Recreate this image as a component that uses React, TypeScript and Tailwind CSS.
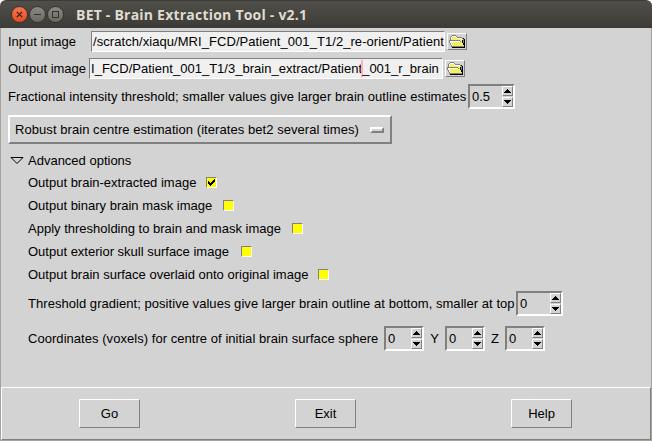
import React from "react";

function Label({ w, className = "", children }: { w: number; className?: string; children: React.ReactNode }) {
  return (
    <span className={`block shrink-0 whitespace-pre ${className}`} style={{ width: w }}>
      {children}
    </span>
  );
}

function Spin({ value, className }: { value: string; className: string }) {
  return (
    <div
      className={`flex h-[25px] shrink-0 items-center justify-between border-2 border-t-[#808080] border-l-[#808080] border-r-white border-b-white pl-[2px] ${className}`}
    >
      <span>{value}</span>
      <div className="flex h-[21px] w-[11px] flex-col justify-between">
        <ArrowButton d="M4 2H5V3H6V4H7V5H8V6H1V5H2V4H3V3H4Z" />
        <ArrowButton d="M1 2H8V3H7V4H6V5H5V6H4V5H3V4H2V3H1Z" />
      </div>
    </div>
  );
}

function ArrowButton({ d }: { d: string }) {
  return (
    <button className="flex h-[10px] w-[11px] items-center justify-center border border-t-white border-l-white border-r-[#808080] border-b-[#808080]">
      <svg width="9" height="8" viewBox="0 0 9 8" className="shrink-0" shapeRendering="crispEdges">
        <path d={d} fill="#000" />
      </svg>
    </button>
  );
}

// Pixel map of the open folder: g = outline, w = highlight, d = dithered yellow, k = shadow.
const FOLDER = [
  "...gggg.........",
  "..gwwwwg........",
  ".gwddddwggggg...",
  ".gwdddddwwwwwgk.",
  ".gddddddddddddgk",
  "gggggggggggddkgk",
  "gwwwwwwwwwwgdkgk",
  "gwdddddddddddkgk",
  ".gwdddddddddddkk",
  ".gwdddddddddddkk",
  "..gwdddddddddddk",
  "..gggggggggggggk",
  "...kkkkkkkkkkkkk",
];

function folderColor(c: string, x: number, y: number) {
  if (c === "g") return "#808080";
  if (c === "w") return "#ffffff";
  if (c === "k") return "#000000";
  return (x + y) % 2 ? "#e2e2c8" : "#ffff00";
}

function FolderButton() {
  return (
    <button className="ml-[2px] flex h-[17px] w-5 shrink-0 items-center justify-center border border-t-white border-l-white border-r-[#808080] border-b-[#808080]">
      <svg width="16" height="13" viewBox="0 0 16 13" shapeRendering="crispEdges">
        {FOLDER.flatMap((row, y) =>
          row.split("").map((c, x) =>
            c === "." ? null : <rect key={`${x}-${y}`} x={x} y={y} width="1" height="1" fill={folderColor(c, x, y)} />
          )
        )}
      </svg>
    </button>
  );
}

function CheckRow({ text, w, checked }: { text: string; w: number; checked?: boolean }) {
  return (
    <div className="flex h-[23px] items-center pl-[27px]">
      <Label w={w}>{text}</Label>
      <div className="h-[11px] w-[11px] shrink-0 border border-t-[#808080] border-l-[#808080] border-r-white border-b-white bg-[#ffff00]">
        {checked && (
          <svg width="9" height="9" viewBox="0 0 9 9" className="block" shapeRendering="crispEdges">
            <path d="M1 3H2V4H3V5H4V4H5V3H6V2H7V1H8V4H7V5H6V6H5V7H4V8H3V7H2V6H1Z" fill="#000" />
          </svg>
        )}
      </div>
    </div>
  );
}

function WindowButton({ close, children }: { close?: boolean; children: React.ReactNode }) {
  return (
    <button
      className={`flex h-[17px] w-[17px] items-center justify-center rounded-full border border-[#35342f] ${
        close ? "bg-linear-to-b from-[#f4754f] to-[#e64c1c]" : "bg-linear-to-b from-[#8b8982] to-[#6b6963]"
      }`}
    >
      <svg width="7" height="7" viewBox="0 0 7 7" className="shrink-0" fill="none" stroke={close ? "#421b0f" : "#33322d"}>
        {children}
      </svg>
    </button>
  );
}

function ActionButton({ children }: { children: string }) {
  return (
    <button className="h-[29px] w-[61px] border border-t-white border-l-white border-r-[#808080] border-b-[#808080] text-center">
      {children}
    </button>
  );
}

export default function App() {
  return (
    <div className="h-[441px] w-[652px] overflow-hidden bg-white font-['Liberation_Sans',Arial,sans-serif] text-[13px] leading-[15px] text-black">
      <header className="flex h-7 items-center rounded-t-[6px] border-t border-[#3c3b37] bg-linear-to-b from-[#504f49] to-[#3c3b37] pl-[11px]">
        <div className="flex gap-px">
          <WindowButton close>
            <path d="M.8 .8L6.2 6.2M6.2 .8L.8 6.2" strokeWidth="1.2" />
          </WindowButton>
          <WindowButton>
            <path d="M0 3.5H7" />
          </WindowButton>
          <WindowButton>
            <rect x=".5" y=".5" width="6" height="6" />
          </WindowButton>
        </div>
        <h1 className="ml-[12px] whitespace-nowrap font-['Open_Sans','Noto_Sans',sans-serif] text-[14px] font-bold tracking-[0.22px] text-[#dfdbd2]">
          BET - Brain Extraction Tool - v2.1
        </h1>
      </header>

      <div className="flex h-[413px] flex-col border-x border-b border-[#a5a19d] bg-[#d3d3d3]">
        <main className="h-[359px]">
          <div className="flex h-[27px] items-center pl-[7px]">
            <Label w={83}>Input image</Label>
            <div className="h-[21px] w-[354px] overflow-hidden border border-t-[#808080] border-l-[#808080] border-r-white border-b-white bg-[#f0f0f0] pl-px leading-[20px] tracking-[0.06px] whitespace-nowrap">
              /scratch/xiaqu/MRI_FCD/Patient_001_T1/2_re-orient/Patient
            </div>
            <FolderButton />
          </div>
          <div className="flex h-[27px] items-center pl-[7px]">
            <Label w={81}>Output image</Label>
            <div className="flex h-[21px] w-[354px] overflow-hidden border border-t-[#808080] border-l-[#808080] border-r-white border-b-white bg-[#f0f0f0] pl-px leading-[20px] whitespace-nowrap">
              <span className="tracking-[0.02px]">I_FCD/Patient_001_T1/3_brain_extract/Patient</span>
              <span className="-ml-px h-[17px] w-[2px] shrink-0 self-center bg-[#ffb0b0]" />
              <span className="-ml-px">_001_r_brain</span>
            </div>
            <FolderButton />
          </div>
          <div className="flex h-[29px] items-center pl-[7px]">
            <Label w={460} className="tracking-[0.055px]">
              Fractional intensity threshold; smaller values give larger brain outline estimates
            </Label>
            <Spin value="0.5" className="w-[47px]" />
          </div>
          <div className="mt-[4px] ml-[7px] flex h-[29px] w-[384px] items-center border-2 border-t-white border-l-white border-r-[#808080] border-b-[#808080] pl-[5px]">
            <Label w={355} className="tracking-[0.06px]">
              Robust brain centre estimation (iterates bet2 several times)
            </Label>
            <div className="h-[6px] w-[14px] border-2 border-t-white border-l-white border-r-[#808080] border-b-[#808080]" />
          </div>
          <div className="mt-[6px] flex h-[21px] items-center pl-[9px]">
            <svg width="14" height="9" viewBox="0 0 14 9">
              <path d="M1 1.5H13L7 7.5Z" fill="none" stroke="#000" />
            </svg>
            <span className="ml-[4px]">Advanced options</span>
          </div>
          <CheckRow text="Output brain-extracted image" w={178} checked />
          <CheckRow text="Output binary brain mask image" w={195} />
          <CheckRow text="Apply thresholding to brain and mask image" w={264} />
          <CheckRow text="Output exterior skull surface image" w={213} />
          <CheckRow text="Output brain surface overlaid onto original image" w={290} />
          <div className="mt-[5px] flex h-[25px] items-center pl-[27px]">
            <Label w={488} className="tracking-[0.045px]">
              Threshold gradient; positive values give larger brain outline at bottom, smaller at top
            </Label>
            <Spin value="0" className="w-[47px]" />
          </div>
          <div className="mt-[10px] flex h-[25px] items-center pl-[27px]">
            <Label w={356} className="tracking-[0.045px]">
              Coordinates (voxels) for centre of initial brain surface sphere
            </Label>
            <Spin value="0" className="w-10" />
            <span className="w-[21px] text-center">Y</span>
            <Spin value="0" className="w-10" />
            <span className="w-5 text-center">Z</span>
            <Spin value="0" className="w-10" />
          </div>
        </main>
        <footer className="flex h-[53px] items-center gap-[155px] border border-t-white border-l-white border-r-[#808080] border-b-[#808080] pl-[77px]">
          <ActionButton>Go</ActionButton>
          <ActionButton>Exit</ActionButton>
          <ActionButton>Help</ActionButton>
        </footer>
      </div>
    </div>
  );
}
